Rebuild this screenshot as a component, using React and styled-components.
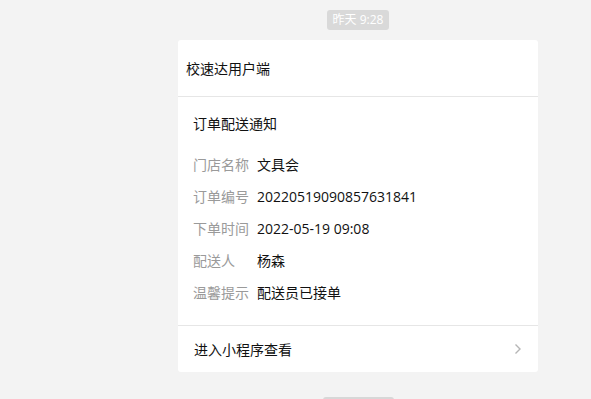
import React from 'react';
import styled, { createGlobalStyle } from 'styled-components';

const GlobalStyle = createGlobalStyle`
    html, body {
        margin: 0;
        padding: 0;
        background: #f3f3f3;
        font-family: "Open Sans", "Noto Sans CJK SC", sans-serif;
    }
`

const Page = styled.div`
    padding-top: 10px;
    min-height: 399px;
    box-sizing: border-box;
`

const Column = styled.div`
    width: 360px;
    margin-left: 178px;
    display: flex;
    flex-direction: column;
    align-items: center;
`

const TimePill = styled.div`
    height: 20px;
    line-height: 20px;
    padding: 0 6px;
    border-radius: 3px;
    background: #d9d9d9;
    color: #ffffff;
    font-size: 12px;
    margin-bottom: 10px;
`

const Card = styled.div`
    width: 100%;
    background: #ffffff;
    border-radius: 3px;
`

const Header = styled.div`
    height: 56px;
    display: flex;
    align-items: center;
    padding-left: 8px;
    font-size: 14px;
    color: #111111;
    border-bottom: 1px solid #e6e6e6;
`

const Body = styled.div`
    padding: 17px 15px 17px 15px;
    border-bottom: 1px solid #e6e6e6;
`

const Title = styled.div`
    font-size: 14px;
    line-height: 20px;
    color: #111111;
    margin-bottom: 14px;
`

const Row = styled.div`
    display: flex;
    height: 32px;
    align-items: center;
    font-size: 14px;
`

const Label = styled.span`
    width: 64px;
    flex-shrink: 0;
    color: #9a9a9a;
`

const Value = styled.span`
    color: #111111;
`

const Footer = styled.div`
    height: 46px;
    display: flex;
    align-items: center;
    justify-content: space-between;
    padding: 0 16px 0 16px;
    font-size: 14px;
    color: #111111;
`

const BottomPill = styled.div`
    width: 71px;
    height: 10px;
    margin-top: 25px;
    border-radius: 3px;
    background: #d7d7d7;
`

const Chevron = () => (
    <svg width="8" height="12" viewBox="0 0 8 12">
        <path d="M1.5 1.5 L6 6 L1.5 10.5" fill="none" stroke="#b5b5b5" strokeWidth="1.4" />
    </svg>
)

const rows = [
    { label: '门店名称', value: '文具会' },
    { label: '订单编号', value: '20220519090857631841' },
    { label: '下单时间', value: '2022-05-19 09:08' },
    { label: '配送人', value: '杨森' },
    { label: '温馨提示', value: '配送员已接单' },
]

const App = () => {
    return (
        <Page>
            <GlobalStyle />
            <Column>
                <TimePill>昨天 9:28</TimePill>
                <Card>
                    <Header>校速达用户端</Header>
                    <Body>
                        <Title>订单配送通知</Title>
                        {rows.map((r) => (
                            <Row key={r.label}>
                                <Label>{r.label}</Label>
                                <Value>{r.value}</Value>
                            </Row>
                        ))}
                    </Body>
                    <Footer>
                        <span>进入小程序查看</span>
                        <Chevron />
                    </Footer>
                </Card>
                <BottomPill />
            </Column>
        </Page>
    )
}

export default App
